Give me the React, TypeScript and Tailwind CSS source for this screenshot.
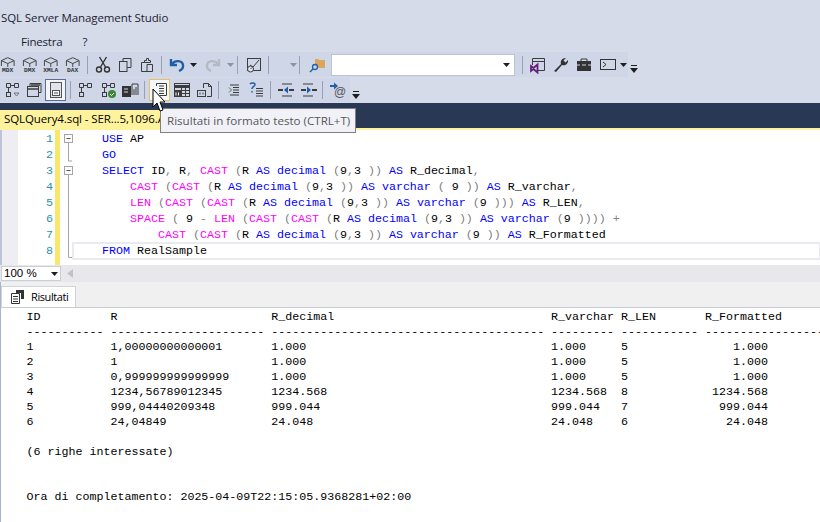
const mono = "font-['Liberation_Mono',monospace]";
const ui = "font-['Open_Sans',sans-serif]";

type Tok = [string, string];
const K = "text-[#0000ff]";
const F = "text-[#ff00ff]";
const G = "text-[#808080]";
const T = "text-[#000000]";

const castDec: Tok[] = [
  ["CAST ", F], ["(", G], ["CAST ", F], ["(", G], ["R ", T], ["AS decimal ", K], ["(", G], ["9", T], [",", G], ["3 ", T], ["))", G], [" ", T],
];

const codeLines: { n: number; indent: number; toks: Tok[] }[] = [
  { n: 1, indent: 0, toks: [["USE ", K], ["AP", T]] },
  { n: 2, indent: 0, toks: [["GO", K]] },
  { n: 3, indent: 0, toks: [["SELECT ", K], ["ID", T], [", ", G], ["R", T], [", ", G], ["CAST ", F], ["(", G], ["R ", T], ["AS decimal ", K], ["(", G], ["9", T], [",", G], ["3 ", T], ["))", G], [" AS ", K], ["R_decimal", T], [",", G]] },
  { n: 4, indent: 4, toks: [...castDec, ["AS varchar ", K], ["( ", G], ["9", T], [" )", G], [") ", G], ["AS ", K], ["R_varchar", T], [",", G]] },
  { n: 5, indent: 4, toks: [["LEN ", F], ["(", G], ...castDec, ["AS varchar ", K], ["(", G], ["9 ", T], [")", G], ["))", G], [" AS ", K], ["R_LEN", T], [",", G]] },
  { n: 6, indent: 4, toks: [["SPACE ", F], ["( ", G], ["9 ", T], ["- ", G], ["LEN ", F], ["(", G], ...castDec, ["AS varchar ", K], ["(", G], ["9 ", T], [")", G], ["))) ", G], ["+", G]] },
  { n: 7, indent: 8, toks: [...castDec, ["AS varchar ", K], ["(", G], ["9 ", T], ["))", G], [" AS ", K], ["R_Formatted", T]] },
  { n: 8, indent: 0, toks: [["FROM ", K], ["RealSample", T]] },
];

const results = `ID          R                      R_decimal                               R_varchar R_LEN       R_Formatted
----------- ---------------------- --------------------------------------- --------- ----------- ------------------
1           1,00000000000001       1.000                                   1.000     5               1.000
2           1                      1.000                                   1.000     5               1.000
3           0,999999999999999      1.000                                   1.000     5               1.000
4           1234,56789012345       1234.568                                1234.568  8            1234.568
5           999,04440209348        999.044                                 999.044   7             999.044
6           24,04849               24.048                                  24.048    6              24.048

(6 righe interessate)


Ora di completamento: 2025-04-09T22:15:05.9368281+02:00`;

function Caret({ color = "#1e1e1e" }: { color?: string }) {
  return (
    <svg width="7" height="4" viewBox="0 0 7 4">
      <path d="M0 0h7L3.5 4z" fill={color} />
    </svg>
  );
}

function Overflow() {
  return (
    <svg width="8" height="10" viewBox="0 0 8 10" className="mt-[12px] ml-[2px]">
      <path d="M1 1h6v1H1zM0 4h8L4 9z" fill="#1e1e1e" />
    </svg>
  );
}

function Sep({ mx = "mx-[3px]" }: { mx?: string }) {
  return <div className={`w-px h-[18px] bg-[#99a0b3] shrink-0 ${mx}`} />;
}

function Cube({ label }: { label: string }) {
  return (
    <div className="w-[21.5px] h-[22px] flex items-center justify-center shrink-0">
      <svg width="22" height="20" viewBox="0 0 22 20">
        <path d="M4.500 11V5.500l6.500-3 6.500 3V11M4.500 5.500l6.500 3 6.500-3M11 8.500V12" fill="none" stroke="#444" strokeWidth="1" />
        <text x="11" y="17" textAnchor="middle" fontSize="6.400" fontWeight="700" fill="#333" fontFamily="Liberation Mono">{label}</text>
      </svg>
    </div>
  );
}

function Ico({ w = 22, children, box = "" }: { w?: number; children: React.ReactNode; box?: string }) {
  return (
    <div style={{ width: w }} className={`h-[22px] flex items-center justify-center shrink-0 ${box}`}>
      <svg width="18" height="18" viewBox="0 0 18 18">{children}</svg>
    </div>
  );
}

const s = { fill: "none", stroke: "#3c3c3c", strokeWidth: 1 };

function Toolbar1() {
  return (
    <div className="h-[26px] flex items-start">
      <div className="h-[25px] flex items-center bg-[#cfd6e8] w-[628px] shrink-0">
        <div className="flex -ml-[3px] mr-[3px]">
          <Cube label="MDX" />
          <Cube label="DMX" />
          <Cube label="XMLA" />
          <Cube label="DAX" />
        </div>
        <Sep mx="ml-[1px] mr-[4px]" />
        <Ico>
          <path d="M5.500 1l6 10M12.500 1l-6 10" fill="none" stroke="#333" strokeWidth="1.400" />
          <circle cx="5" cy="13.500" r="2.500" fill="none" stroke="#333" strokeWidth="1.400" />
          <circle cx="13" cy="13.500" r="2.500" fill="none" stroke="#333" strokeWidth="1.400" />
        </Ico>
        <Ico>
          <path d="M7 5V2.500h8v9h-4" {...s} />
          <rect x="3.500" y="5.500" width="7.500" height="10" {...s} />
        </Ico>
        <Ico>
          <path d="M6.500 6.500H3.500v9H9" {...s} />
          <path d="M6.500 6.500V4.500h2V2.500h2v2h2v2zM9 8.500h5.500v7H9z" {...s} />
        </Ico>
        <Sep mx="ml-[3px] mr-[5px]" />
        <Ico w={20}>
          <path d="M3 3v6h6M4 8c3-4 10-4 11 1 .5 3-1.500 5-4 6" fill="none" stroke="#1f5fa8" strokeWidth="2.400" />
        </Ico>
        <div className="w-[15px] flex justify-center"><Caret /></div>
        <div className="w-[2px]" />
        <Ico w={20}>
          <path d="M15 3v6H9M14 8c-3-4-10-4-11 1-.5 3 1.500 5 4 6" fill="none" stroke="#b4b9c4" strokeWidth="2.400" />
        </Ico>
        <div className="w-[16px] flex justify-center"><Caret color="#8d93a1" /></div>
        <Sep mx="ml-[0px] mr-[5px]" />
        <Ico>
          <rect x="2.500" y="2.500" width="13" height="12" {...s} />
          <path d="M5 9l3 2 6-7" {...s} />
          <circle cx="5.500" cy="13" r="3" fill="#dfe3ee" stroke="#3c3c3c" />
          <path d="M5.500 13l1.500-1.500" stroke="#3c3c3c" />
        </Ico>
        <Sep mx="ml-[3px] mr-[20px]" />
        <div className="w-[9px] flex justify-center"><Caret color="#8d93a1" /></div>
        <Sep mx="ml-[1px] mr-[7px]" />
        <Ico>
          <path d="M6 3h3l1 1h6v8H6z" fill="#dba65a" />
          <circle cx="6" cy="11" r="2.500" fill="#cfd6e8" stroke="#1f5fa8" strokeWidth="1.300" />
          <path d="M4 13l-3 3" stroke="#1f5fa8" strokeWidth="1.500" />
        </Ico>
        <div className="w-[184px] h-[22px] ml-[2px] bg-white border border-[#bcc3d6] flex items-center justify-end pr-[4px] shrink-0">
          <Caret />
        </div>
        <Sep mx="ml-[7px] mr-[3px]" />
        <Ico w={24}>
          <path d="M3.500 9V2.500h12v12H9M3 5.500h13" {...s} />
          <path d="M2 10l2.500 2 4-3.500v8l-4-3.500L2 15z" fill="none" stroke="#68217a" strokeWidth="1.800" />
        </Ico>
        <Ico w={22}>
          <path d="M2 15l7-7c-1-3 1-6 5-6l-2.500 2.500 2 2L16 4c.5 4-3 6-6 5l-6 7z" fill="#333" />
        </Ico>
        <Ico w={24}>
          <path d="M2 5h14v10H2z" fill="#333" />
          <path d="M6 5V3h6v2" {...s} />
          <path d="M2 9h14" stroke="#cfd6e8" />
          <path d="M5 8h2v2H5zM11 8h2v2h-2z" fill="#333" />
        </Ico>
        <Ico w={24}>
          <rect x="1.500" y="3.500" width="15" height="10" fill="none" stroke="#333" />
          <path d="M4 6l3 2.500L4 11" fill="none" stroke="#333" />
        </Ico>
        <div className="w-[9px] flex justify-center"><Caret /></div>
      </div>
      <Overflow />
    </div>
  );
}

function Toolbar2() {
  return (
    <div className="h-[25px] flex items-start">
      <div className="h-[24px] flex items-center bg-[#cfd6e8] w-[350px] shrink-0">
        <Ico w={23}>
          <path d="M3.500 2.500h4v4h-4zM11.500 2.500h4v4h-4zM7.500 4.500h4M5.500 6.500v5" {...s} />
          <rect x="3.500" y="11.500" width="4" height="4" {...s} />
          <path d="M11 12h5l-2.500 3z" fill="none" stroke="#777" />
        </Ico>
        <Ico w={22}>
          <rect x="2.500" y="5.500" width="11" height="10" {...s} />
          <path d="M5 5V2.500h11v9h-2.500" {...s} />
          <path d="M3 8h10M6 4h9" stroke="#3c3c3c" strokeWidth="1.500" />
        </Ico>
        <Ico w={21} box="border border-[#5d6b99] bg-[#f2f4f8]">
          <rect x="3.500" y="1.500" width="11" height="15" fill="#e1e4ec" stroke="#555" />
          <rect x="5.500" y="9.500" width="7" height="5" fill="#f2f4f8" stroke="#555" />
          <path d="M7 12h4" stroke="#555" />
        </Ico>
        <Sep mx="ml-[4px] mr-[3px]" />
        <Ico>
          <path d="M3.500 2.500h4v4h-4zM11.500 2.500h4v4h-4zM7.500 4.500h4M5.500 6.500v5" {...s} />
          <rect x="3.500" y="11.500" width="4" height="4" {...s} />
        </Ico>
        <Ico w={23}>
          <path d="M3.500 2.500h4v4h-4zM11.500 2.500h4v4h-4zM7.500 4.500h4M5.500 6.500v5" {...s} />
          <rect x="3.500" y="11.500" width="4" height="4" {...s} />
          <circle cx="13" cy="13" r="4" fill="#388a34" />
          <path d="M11 13l1.500 1.500L15 12" stroke="#fff" fill="none" />
        </Ico>
        <Ico w={22}>
          <rect x="1" y="5" width="9" height="11" fill="#333" />
          <path d="M3 8h4M3 11h4" stroke="#cfd6e8" />
          <path d="M11 14V3h6v11M13 14V8M15 14V6" {...s} />
        </Ico>
        <Sep mx="ml-[3px] mr-[4px]" />
        <Ico w={21} box="border border-[#e5c365] bg-[#f6f7fa]">
          <path d="M5.500 5V2.500h10v12h-7" {...s} />
          <path d="M8 5h5M8 7.500h5M8 10h5M8 12.500h5" {...s} />
        </Ico>
        <Ico w={23}>
          <rect x="1.500" y="2.500" width="15" height="13" {...s} />
          <path d="M1 5.500h16" stroke="#3c3c3c" strokeWidth="3" />
          <path d="M2 9.500h15M2 12.500h15M8.500 4v12M12.500 4v12" {...s} />
          <rect x="1" y="10" width="7" height="6" fill="#3c3c3c" />
          <path d="M3 11.500v3M5.500 11.500v3" stroke="#fff" />
        </Ico>
        <Ico w={23}>
          <path d="M7.500 7V2.500h5l3 3v10H11M12.500 2.500v3h3" {...s} />
          <rect x="1.500" y="9.500" width="8" height="6" {...s} />
          <path d="M4 11.500v2M7 11.500v2" stroke="#3c3c3c" />
        </Ico>
        <Sep mx="ml-[2px] mr-[5px]" />
        <Ico w={20}>
          <path d="M5 4h9M8 6.500h6M8 9h6M8 11.500h6M5 14h9" fill="none" stroke="#3c3c3c" />
          <path d="M4 6.500l2.500 2.500L4 11.500" fill="none" stroke="#388a34" />
        </Ico>
        <Ico w={23}>
          <path d="M9 7.500h7M9 10h7M9 12.500h7M9 15h7" fill="none" stroke="#3c3c3c" />
          <path d="M3 3c1-1.500 5-1.500 5 .5 0 2-3 2-3 4.500M5 10v1.500" fill="none" stroke="#1f5fa8" strokeWidth="1.500" />
        </Ico>
        <Sep mx="ml-[3px] mr-[3px]" />
        <Ico w={23}>
          <path d="M5 3h10M5 15h10" fill="none" stroke="#3c3c3c" />
          <path d="M1 9h5M12 9h5" stroke="#3c3c3c" strokeWidth="2" />
          <path d="M7 9l4-3.500v7z" fill="#1f5fa8" />
        </Ico>
        <Ico w={23}>
          <path d="M3 3h10M3 15h10" fill="none" stroke="#3c3c3c" />
          <path d="M1 9h5M12 9h5" stroke="#3c3c3c" strokeWidth="2" />
          <path d="M11 9L7 5.500v7z" fill="#1f5fa8" />
        </Ico>
        <Sep mx="ml-[2px] mr-[4px]" />
        <Ico w={22}>
          <path d="M1 5h5" stroke="#1f5fa8" strokeWidth="2" />
          <path d="M5 1.500L9 5l-4 3.500z" fill="#1f5fa8" />
          <text x="11" y="15" textAnchor="middle" fontSize="12" fill="#555" fontFamily="Liberation Sans">@</text>
        </Ico>
      </div>
      <Overflow />
    </div>
  );
}

function FoldGutter() {
  return (
    <svg width="11" height="135" viewBox="0 0 11 135" className="shrink-0">
      <path d="M6.500 12V31H10" fill="none" stroke="#a5a5a5" />
      <path d="M6.500 45V127.500H10" fill="none" stroke="#a5a5a5" />
      <rect x="2.500" y="4.500" width="8" height="8" fill="#fff" stroke="#a5a5a5" />
      <path d="M4.500 8.500h4" stroke="#555" />
      <rect x="2.500" y="36.500" width="8" height="8" fill="#fff" stroke="#a5a5a5" />
      <path d="M4.500 40.500h4" stroke="#555" />
    </svg>
  );
}

export default function App() {
  return (
    <div className="w-[820px] h-[522px] overflow-hidden relative bg-[#d6dbe9] font-['Liberation_Sans',sans-serif] text-[#1e1e1e] flex flex-col">
      <div className={`h-[31px] flex items-center pl-[1px] text-[11.5px] tracking-[-0.1px] text-[#1b2333] shrink-0 pt-[5px] ${ui}`}>
        SQL Server Management Studio
      </div>
      <div className={`h-[21px] flex items-center text-[11.5px] tracking-[-0.2px] text-[#1b2333] shrink-0 ${ui}`}>
        <span className="ml-[21px]">Finestra</span>
        <span className="ml-[20px]">?</span>
      </div>
      <Toolbar1 />
      <Toolbar2 />

      {/* document tab strip */}
      <div className="h-[25px] bg-[#293955] flex items-end shrink-0">
        <div className={`w-[165px] h-[18px] bg-[#fff29d] text-[11.5px] tracking-[-0.1px] leading-[18px] pl-[4px] whitespace-nowrap text-black ${ui}`}>
          SQLQuery4.sql - SER...5,1096.A
        </div>
      </div>
      <div className="h-[2px] bg-[#fff29d] shrink-0" />

      {/* editor */}
      <div className="h-[135px] bg-white flex shrink-0 overflow-hidden">
        <div className="w-[18px] bg-[#eeeef2] border-l-2 border-[#bcc4da] shrink-0" />
        <div className="w-[37px] shrink-0 pt-[1px] flex flex-col items-end pr-[2px]">
          {codeLines.map((l) => (
            <div key={l.n} className={`${mono} text-[11.67px] leading-[16px] h-[16px] text-[#2b91af]`}>{l.n}</div>
          ))}
        </div>
        <div className="w-[5px] bg-[#fbe66c] shrink-0" />
        <div className="w-[2px] shrink-0" />
        <FoldGutter />
        <div className="flex-1 pt-[1px] min-w-0">
          {codeLines.map((l) => (
            <div
              key={l.n}
              className={`${mono} text-[11.67px] leading-[16px] h-[16px] whitespace-pre pl-[29px] ${l.n === 8 ? "outline outline-2 -outline-offset-1 outline-[#eaeaf2]" : ""}`}
            >
              {" ".repeat(l.indent)}
              {l.toks.map((t, i) => (
                <span key={i} className={t[1]}>{t[0]}</span>
              ))}
            </div>
          ))}
        </div>
      </div>

      {/* zoom + scrollbar */}
      <div className="h-[17px] bg-[#e8e8ec] flex items-center shrink-0">
        <div className="w-[60px] h-[15px] ml-[1px] bg-white border border-[#ccced6] flex items-center justify-between px-[2px] text-[11.5px] text-black">
          <span>100 %</span>
          <Caret />
        </div>
        <svg width="6" height="9" viewBox="0 0 6 9" className="ml-[6px]">
          <path d="M6 0v9L0 4.500z" fill="#c2c3c9" />
        </svg>
      </div>

      {/* results */}
      <div className="flex-1 bg-white flex flex-col min-h-0 border-l border-[#a9b3cf]">
        <div className="h-[26px] bg-[#f0f0f0] border-b border-[#c8cbd2] flex items-end shrink-0">
          <div className={`h-[21px] w-[75px] bg-white border border-[#d0d3da] border-b-0 flex items-center gap-[5px] pl-[8px] text-[11px] text-black tracking-[-0.4px] ${ui}`}>
            <svg width="16" height="16" viewBox="0 0 16 16" className="shrink-0">
              <path d="M1.500 4.500h8v10h-8z" fill="#fff" stroke="#333" />
              <path d="M3 7.500h5M3 10h5M3 12.500h5" stroke="#333" />
              <path d="M6 1h8v9h-3V4H6z" fill="#333" />
            </svg>
            Risultati
          </div>
        </div>
        <pre className={`${mono} text-[11.67px] leading-[15px] text-black pl-[25.500px] pt-[2px] whitespace-pre m-0`}>{results}</pre>
      </div>

      {/* tooltip */}
      <div className={`absolute left-[160px] top-[108px] h-[25px] w-[196px] bg-[#f1f2f7] border border-[#808080] flex items-center pl-[6px] text-[11.6px] text-[#575757] whitespace-nowrap ${ui}`}>
        Risultati in formato testo (CTRL+T)
      </div>

      {/* mouse pointer */}
      <svg width="14" height="25" viewBox="0 0 14 25" className="absolute left-[152px] top-[88px]">
        <path d="M1 1v18l4-4 3 8 3-1-3-8h5z" fill="#fff" stroke="#000" />
      </svg>
    </div>
  );
}
